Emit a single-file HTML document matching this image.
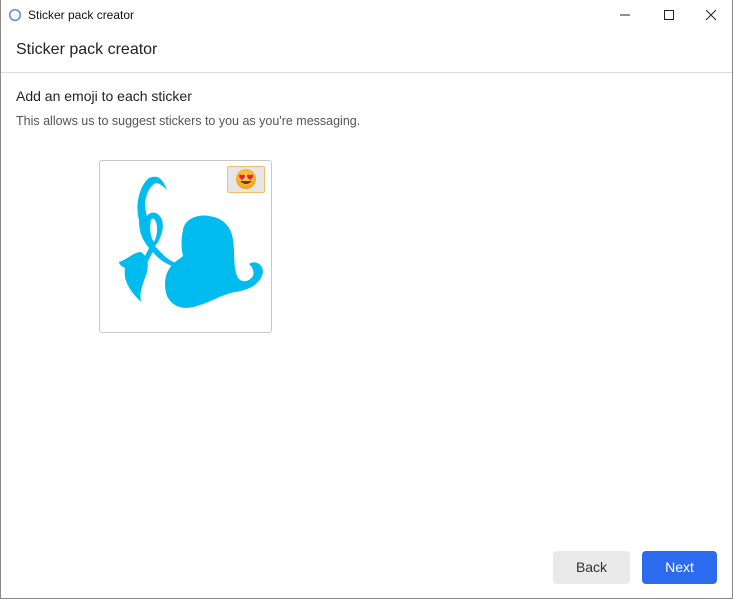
<!DOCTYPE html>
<html><head><style>
body{margin:0;width:733px;height:600px;background:#fff;font-family:"Liberation Sans",sans-serif;position:relative;overflow:hidden}
.win{position:absolute;left:0;top:0;width:731px;height:598px;border:1px solid #8a8a8a;border-top:none}
.t{position:absolute;white-space:nowrap}
</style></head><body>
<div class="win"></div>
<svg class="t" style="left:8px;top:8px" width="14" height="14"><circle cx="7" cy="7" r="5.3" fill="none" stroke="#6a8df0" stroke-width="1.6"/></svg>
<div class="t" style="left:28px;top:8px;font-size:12px;color:#111">Sticker pack creator</div>
<svg class="t" style="left:620px;top:8px" width="100" height="14">
<line x1="0" y1="7" x2="10" y2="7" stroke="#222"/>
<rect x="44.5" y="2.5" width="9" height="9" fill="none" stroke="#222"/>
<path d="M86 2L96 12M96 2L86 12" stroke="#222"/>
</svg>
<div class="t" style="left:16px;top:41px;font-size:16px;color:#222">Sticker pack creator</div>
<div style="position:absolute;left:1px;top:72px;width:731px;height:1px;background:#dcdcdc"></div>
<div class="t" style="left:16px;top:88px;font-size:14px;color:#222">Add an emoji to each sticker</div>
<div class="t" style="left:16px;top:114px;font-size:12.5px;color:#555">This allows us to suggest stickers to you as you're messaging.</div>
<div style="position:absolute;left:99px;top:160px;width:171px;height:171px;border:1px solid #c8c8c8;border-radius:3px"></div>
<svg class="t" style="left:99px;top:160px" width="173" height="173">
<g fill="#00bbee" stroke="none">
<path d="M50 18 C60 14 64 20 68 30 C62 24 58 22 55 24 C47 30 44 44 48 56 C52 50 60 52 63 60 C66 70 60 82 56 86 C66 98 74 104 84 104 L84 108 C72 108 60 100 54 92 C50 98 48 104 46 108 L42 104 C46 96 48 92 50 88 C44 80 40 74 40 60 C36 46 40 26 50 18Z M52 60 C50 70 52 78 55 82 C58 76 59 68 57 62 C55 58 53 58 52 60Z"/>
<path d="M42 92 C48 96 50 102 48 112 C44 124 40 132 42 142 C30 130 24 120 26 108 C22 106 20 104 20 102 C28 100 34 92 42 92Z"/>
<path d="M84 70 C86 58 100 54 110 56 C124 58 132 66 134 80 C136 94 134 104 138 116 C142 124 150 122 154 116 C156 110 152 106 150 104 C156 100 164 104 164 112 C162 124 150 130 136 132 C124 134 112 142 98 146 C86 150 74 148 68 136 C64 124 66 112 74 104 C78 100 82 98 84 96 C82 88 82 78 84 70Z"/>
</g>
</svg>
<div style="position:absolute;left:227px;top:166px;width:36px;height:25px;border:1.5px solid #f0c070;background:#e6e6e6;border-radius:2px"></div>
<svg class="t" style="left:235px;top:168px" width="22" height="22">
<defs><radialGradient id="g" cx="50%" cy="40%" r="60%"><stop offset="0" stop-color="#ffd84a"/><stop offset="1" stop-color="#f0a020"/></radialGradient></defs>
<circle cx="11" cy="11" r="10" fill="url(#g)"/>
<path d="M4 8c0-2 3-2 3 0c0-2 3-2 3 0c0 2-3 4-3 4s-3-2-3-4zM12 8c0-2 3-2 3 0c0-2 3-2 3 0c0 2-3 4-3 4s-3-2-3-4z" fill="#e8213a"/>
<path d="M5 13q6 6 12 0z" fill="#6b3a1a"/>
</svg>
<div style="position:absolute;left:553px;top:551px;width:77px;height:33px;background:#e9e9e9;border-radius:4px;font-size:14px;color:#333;text-align:center;line-height:33px">Back</div>
<div style="position:absolute;left:642px;top:551px;width:75px;height:33px;background:#2c6bed;border-radius:4px;font-size:14px;color:#fff;text-align:center;line-height:33px">Next</div>
</body></html>
